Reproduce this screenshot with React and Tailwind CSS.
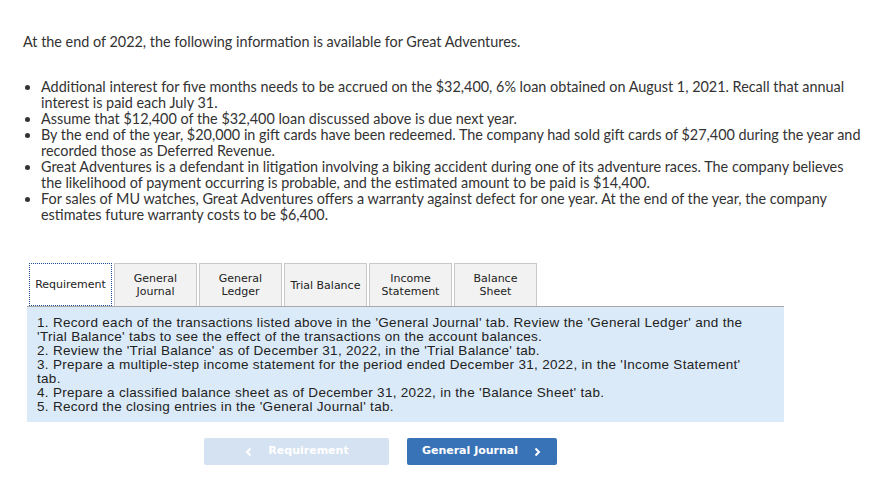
import React from 'react';

const bullets = [
  'Additional interest for five months needs to be accrued on the $32,400, 6% loan obtained on August 1, 2021. Recall that annual interest is paid each July 31.',
  'Assume that $12,400 of the $32,400 loan discussed above is due next year.',
  'By the end of the year, $20,000 in gift cards have been redeemed. The company had sold gift cards of $27,400 during the year and recorded those as Deferred Revenue.',
  'Great Adventures is a defendant in litigation involving a biking accident during one of its adventure races. The company believes the likelihood of payment occurring is probable, and the estimated amount to be paid is $14,400.',
  'For sales of MU watches, Great Adventures offers a warranty against defect for one year. At the end of the year, the company estimates future warranty costs to be $6,400.',
];

const tabs = [
  ['Requirement'],
  ['General', 'Journal'],
  ['General', 'Ledger'],
  ['Trial Balance'],
  ['Income', 'Statement'],
  ['Balance', 'Sheet'],
];

const App = () => {
  return (
    <div className="w-[874px] h-[478px] bg-white text-[#333] overflow-hidden" style={{ fontFamily: 'Lato, "Open Sans", sans-serif' }}>
      <p className="pt-[34px] pl-[23px] text-[14.4px] leading-[16px]">
        At the end of 2022, the following information is available for Great Adventures.
      </p>

      <ul className="mt-[29px] pl-[41px] pr-[10px] text-[14.4px] leading-[16px] list-disc">
        {bullets.map((b, i) => (
          <li key={i}>{b}</li>
        ))}
      </ul>

      <div className="mt-[40px] ml-[27px] w-[757px]" style={{ fontFamily: '"DejaVu Sans", Verdana, sans-serif' }}>
        <div className="flex gap-[2px] pl-[2px] border-b border-[#a8a8a8]">
          {tabs.map((t, i) => (
            <div
              key={i}
              className={
                i === 0
                  ? 'w-[83px] h-[43px] -mb-px flex flex-col items-center justify-center bg-white border border-dotted border-[#1f4e99] text-[11px] leading-[13px] text-[#222]'
                  : 'w-[83px] h-[43px] flex flex-col items-center justify-center bg-[#f2f2f2] border border-b-0 border-[#c9c9c9] text-[11px] leading-[13px] text-[#222]'
              }
            >
              {t.map((l, j) => (
                <span key={j}>{l}</span>
              ))}
            </div>
          ))}
        </div>

        <div
          className="bg-[#dbeaf8] pt-[9px] pb-[8px] pl-[10px] pr-[24px] text-[13.5px] tracking-[0.3px] leading-[14px] text-[#222]"
          style={{ fontFamily: '"Liberation Sans", Arial, sans-serif' }}
        >
          <p>1. Record each of the transactions listed above in the 'General Journal' tab. Review the 'General Ledger' and the 'Trial Balance' tabs to see the effect of the transactions on the account balances.</p>
          <p>2. Review the 'Trial Balance' as of December 31, 2022, in the 'Trial Balance' tab.</p>
          <p>3. Prepare a multiple-step income statement for the period ended December 31, 2022, in the 'Income Statement' tab.</p>
          <p>4. Prepare a classified balance sheet as of December 31, 2022, in the 'Balance Sheet' tab.</p>
          <p>5. Record the closing entries in the 'General Journal' tab.</p>
        </div>
      </div>

      <div className="mt-[16px] ml-[204px] flex gap-[18px]" style={{ fontFamily: '"DejaVu Sans", Verdana, sans-serif' }}>
        <button className="w-[185px] h-[27px] rounded-[2px] bg-[#d5e2f1] text-white text-[11px] font-bold flex items-center justify-center gap-[14px]">
          <svg className="w-[10px] h-[10px]" viewBox="0 0 10 10" fill="none" stroke="currentColor" strokeWidth="2">
            <path d="M6.5 1.5 3 5l3.5 3.5" />
          </svg>
          Requirement
        </button>
        <button className="w-[150px] h-[27px] rounded-[2px] bg-[#3873b8] text-white text-[11px] font-bold flex items-center justify-center gap-[14px]">
          General Journal
          <svg className="w-[10px] h-[10px]" viewBox="0 0 10 10" fill="none" stroke="currentColor" strokeWidth="2">
            <path d="M3.5 1.5 7 5 3.5 8.5" />
          </svg>
        </button>
      </div>
    </div>
  );
};

export default App;
